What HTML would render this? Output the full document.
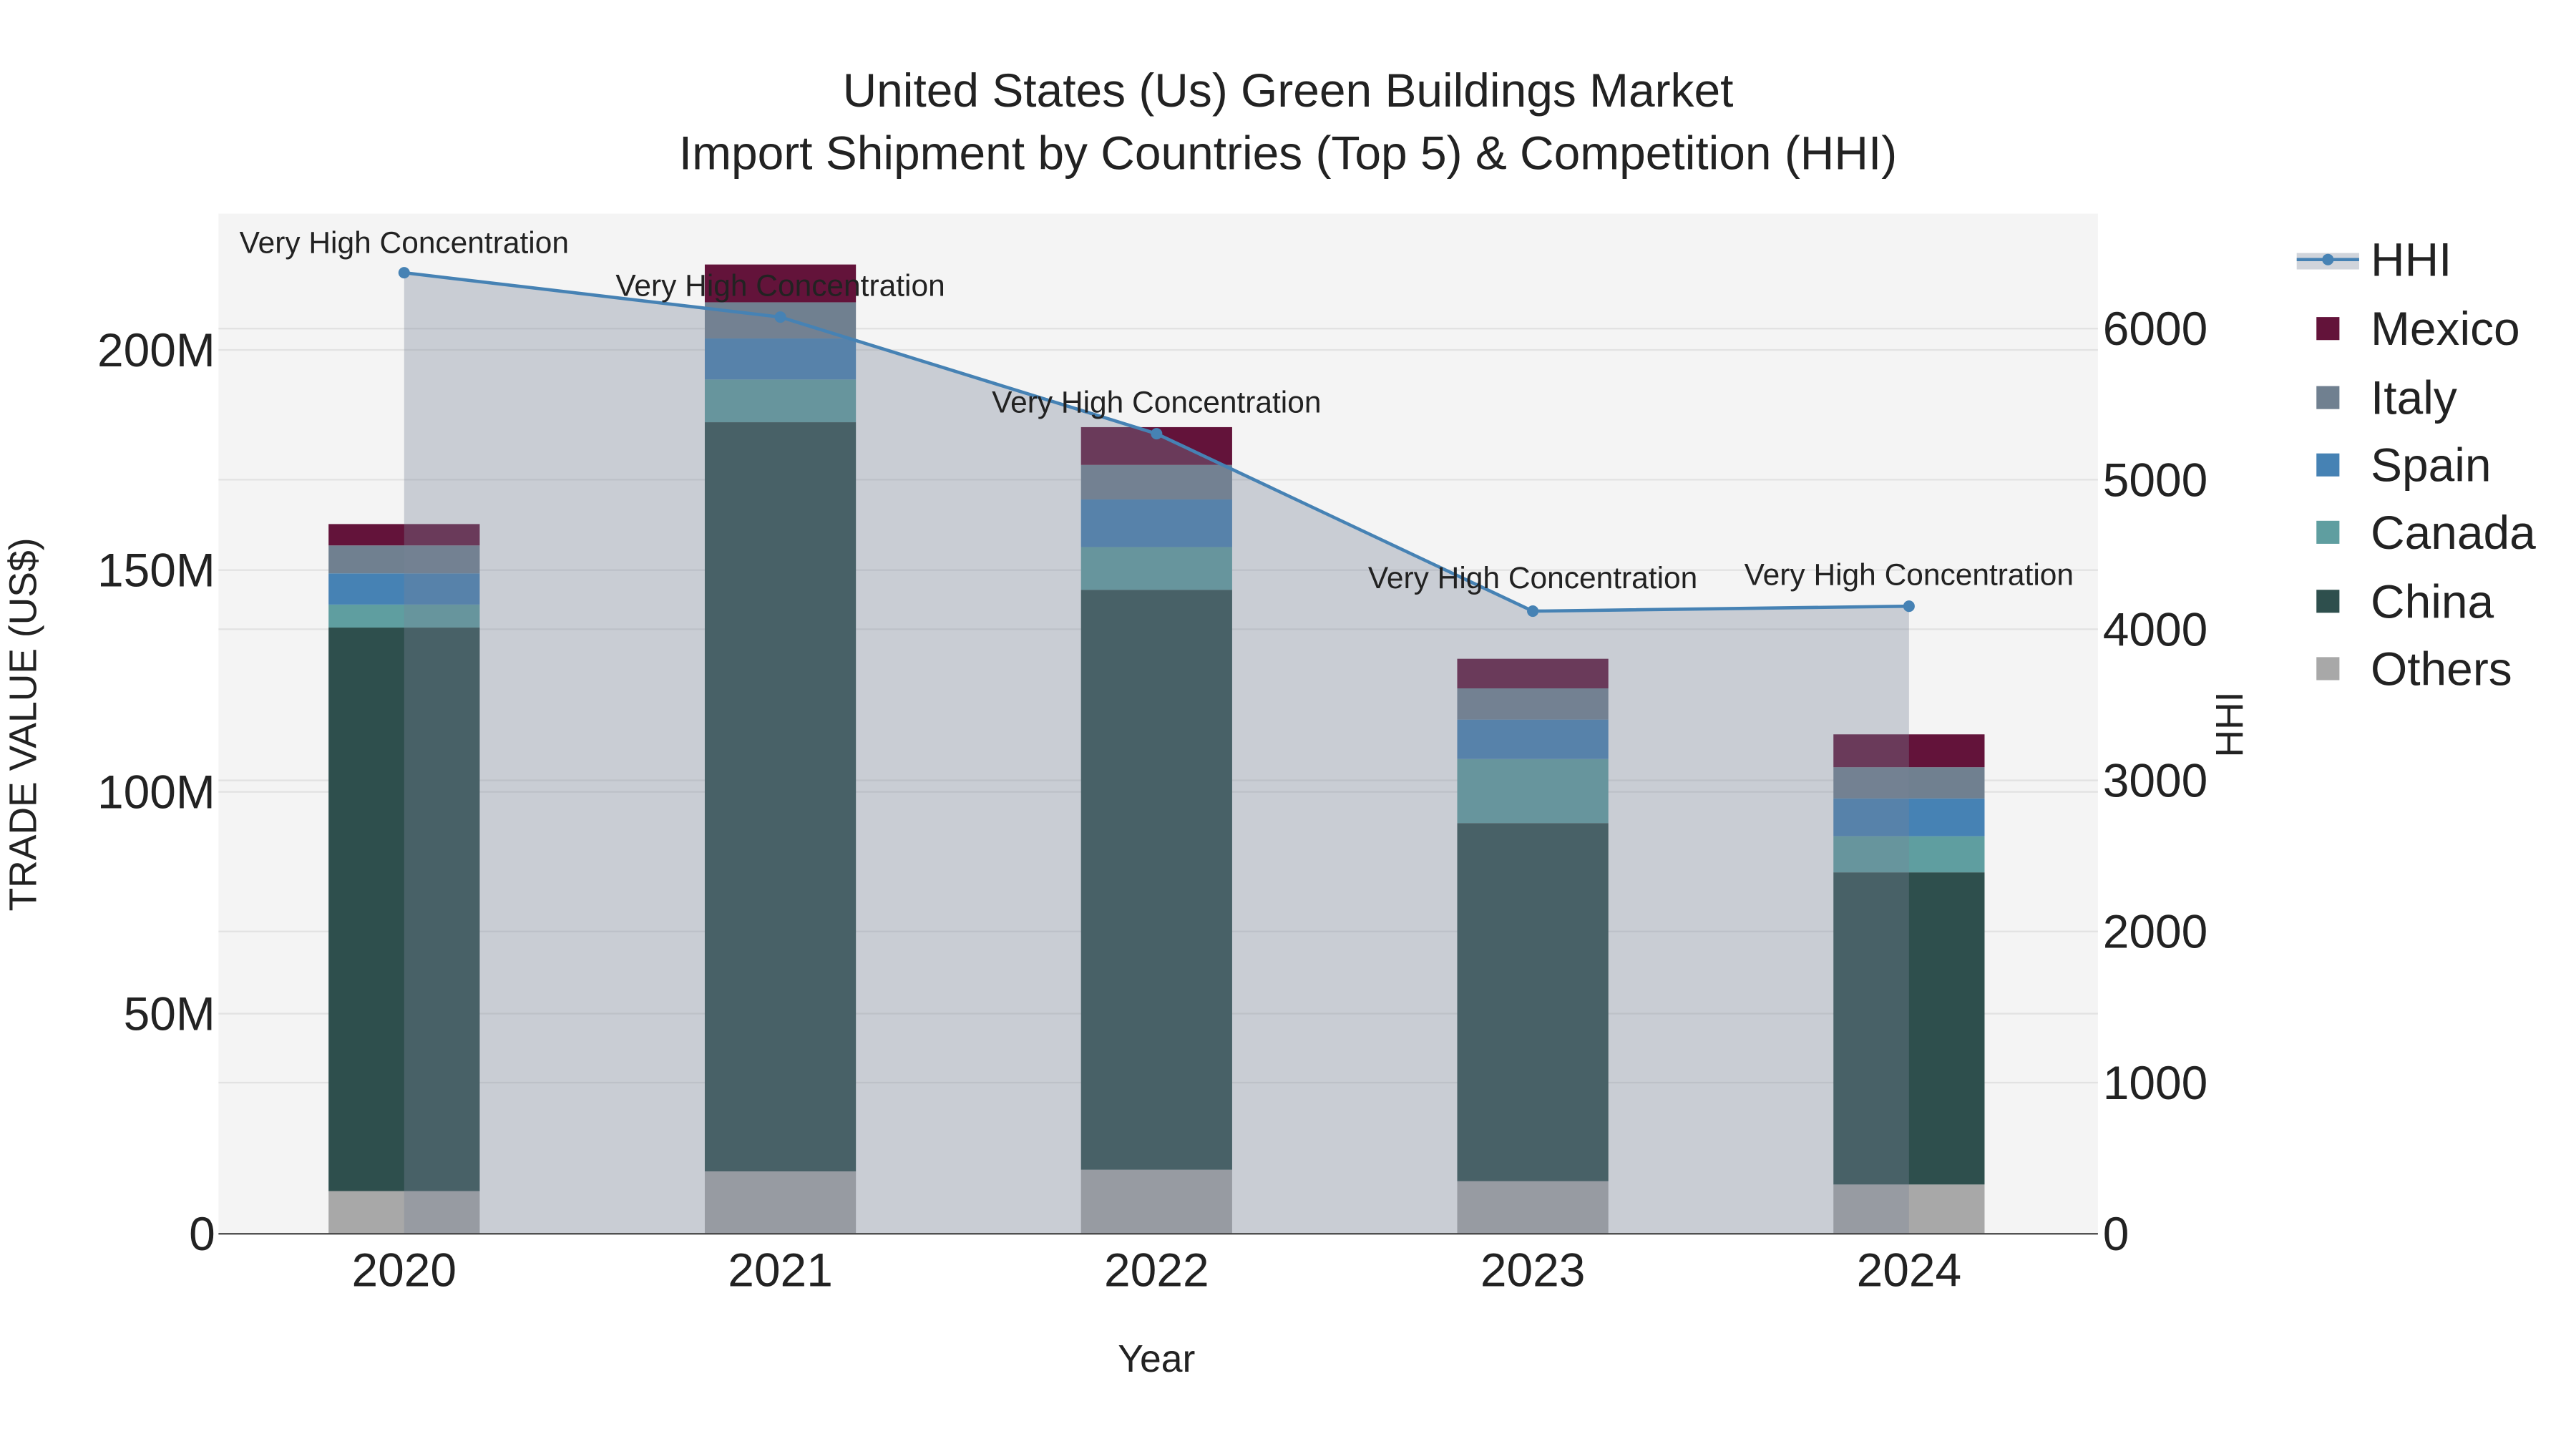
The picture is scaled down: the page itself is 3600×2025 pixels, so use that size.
<!DOCTYPE html>
<html><head><meta charset="utf-8"><style>html,body{margin:0;padding:0;background:#fff}svg{display:block}text{font-family:"Liberation Sans",sans-serif;fill:#222}</style></head><body>
<svg width="3600" height="2025" viewBox="0 0 1568 882" xmlns="http://www.w3.org/2000/svg">
<rect x="0" y="0" width="1600" height="900" fill="#fff"/>
<rect x="133" y="130" width="1144" height="621" fill="#f4f4f4"/>
<g stroke="#e2e2e2" stroke-width="1">
<line x1="133" x2="1277" y1="617" y2="617"/><line x1="133" x2="1277" y1="482" y2="482"/><line x1="133" x2="1277" y1="347" y2="347"/><line x1="133" x2="1277" y1="213" y2="213"/>
<line x1="133" x2="1277" y1="659" y2="659"/><line x1="133" x2="1277" y1="567" y2="567"/><line x1="133" x2="1277" y1="475" y2="475"/><line x1="133" x2="1277" y1="383" y2="383"/><line x1="133" x2="1277" y1="292" y2="292"/><line x1="133" x2="1277" y1="200" y2="200"/>
</g>
<g>
<rect x="200" y="725" width="92" height="26" fill="#a8a8a8"/><rect x="200" y="382" width="92" height="343" fill="#2e4f4d"/><rect x="200" y="368" width="92" height="14" fill="#5f9ea0"/><rect x="200" y="349" width="92" height="19" fill="#4682b4"/><rect x="200" y="332" width="92" height="17" fill="#708090"/><rect x="200" y="319" width="92" height="13" fill="#63133a"/>
<rect x="429" y="713" width="92" height="38" fill="#a8a8a8"/><rect x="429" y="257" width="92" height="456" fill="#2e4f4d"/><rect x="429" y="231" width="92" height="26" fill="#5f9ea0"/><rect x="429" y="206" width="92" height="25" fill="#4682b4"/><rect x="429" y="184" width="92" height="22" fill="#708090"/><rect x="429" y="161" width="92" height="23" fill="#63133a"/>
<rect x="658" y="712" width="92" height="39" fill="#a8a8a8"/><rect x="658" y="359" width="92" height="353" fill="#2e4f4d"/><rect x="658" y="333" width="92" height="26" fill="#5f9ea0"/><rect x="658" y="304" width="92" height="29" fill="#4682b4"/><rect x="658" y="283" width="92" height="21" fill="#708090"/><rect x="658" y="260" width="92" height="23" fill="#63133a"/>
<rect x="887" y="719" width="92" height="32" fill="#a8a8a8"/><rect x="887" y="501" width="92" height="218" fill="#2e4f4d"/><rect x="887" y="462" width="92" height="39" fill="#5f9ea0"/><rect x="887" y="438" width="92" height="24" fill="#4682b4"/><rect x="887" y="419" width="92" height="19" fill="#708090"/><rect x="887" y="401" width="92" height="18" fill="#63133a"/>
<rect x="1116" y="721" width="92" height="30" fill="#a8a8a8"/><rect x="1116" y="531" width="92" height="190" fill="#2e4f4d"/><rect x="1116" y="509" width="92" height="22" fill="#5f9ea0"/><rect x="1116" y="486" width="92" height="23" fill="#4682b4"/><rect x="1116" y="467" width="92" height="19" fill="#708090"/><rect x="1116" y="447" width="92" height="20" fill="#63133a"/>
</g>
<polygon points="246,751 246,166 475,193 704,264 933,372 1162,369 1162,751" fill="rgb(120,132,152)" fill-opacity="0.35"/>
<polyline points="246,166 475,193 704,264 933,372 1162,369" fill="none" stroke="#4682b4" stroke-width="2"/>
<g fill="#4682b4"><circle cx="246" cy="166" r="3.5"/><circle cx="475" cy="193" r="3.5"/><circle cx="704" cy="264" r="3.5"/><circle cx="933" cy="372" r="3.5"/><circle cx="1162" cy="369" r="3.5"/></g>
<line x1="133" x2="1277" y1="751" y2="751" stroke="#444" stroke-width="1"/>
<g font-size="18.5" text-anchor="middle">
<text x="246" y="154">Very High Concentration</text><text x="475" y="180">Very High Concentration</text><text x="704" y="251">Very High Concentration</text><text x="933" y="358">Very High Concentration</text><text x="1162" y="356">Very High Concentration</text>
</g>
<g font-size="28.7" text-anchor="end">
<text x="131" y="761">0</text><text x="131" y="627">50M</text><text x="131" y="492">100M</text><text x="131" y="357">150M</text><text x="131" y="223">200M</text>
</g>
<g font-size="28.7">
<text x="1280" y="761">0</text><text x="1280" y="669">1000</text><text x="1280" y="577">2000</text><text x="1280" y="485">3000</text><text x="1280" y="393">4000</text><text x="1280" y="302">5000</text><text x="1280" y="210">6000</text>
</g>
<g font-size="28.7" text-anchor="middle">
<text x="246" y="783">2020</text><text x="475" y="783">2021</text><text x="704" y="783">2022</text><text x="933" y="783">2023</text><text x="1162" y="783">2024</text>
<text x="784" y="65">United States (Us) Green Buildings Market</text>
<text x="784" y="103">Import Shipment by Countries (Top 5) &amp; Competition (HHI)</text>
</g>
<text x="704" y="835" font-size="23.3" text-anchor="middle">Year</text>
<text transform="translate(22,441) rotate(-90)" font-size="23.3" text-anchor="middle">TRADE VALUE (US$)</text>
<text transform="translate(1365,441) rotate(-90)" font-size="23.3" text-anchor="middle">HHI</text>
<rect x="1398" y="154" width="38" height="10" fill="rgb(120,132,152)" fill-opacity="0.35"/>
<line x1="1398" x2="1436" y1="158" y2="158" stroke="#4682b4" stroke-width="2"/><circle cx="1417" cy="158" r="3.5" fill="#4682b4"/>
<rect x="1410" y="193" width="14" height="14" fill="#63133a"/>
<rect x="1410" y="235" width="14" height="14" fill="#708090"/>
<rect x="1410" y="276" width="14" height="14" fill="#4682b4"/>
<rect x="1410" y="317" width="14" height="14" fill="#5f9ea0"/>
<rect x="1410" y="359" width="14" height="14" fill="#2e4f4d"/>
<rect x="1410" y="400" width="14" height="14" fill="#a8a8a8"/>
<g font-size="28.7">
<text x="1443" y="168">HHI</text><text x="1443" y="210">Mexico</text><text x="1443" y="252">Italy</text><text x="1443" y="293">Spain</text><text x="1443" y="334">Canada</text><text x="1443" y="376">China</text><text x="1443" y="417">Others</text>
</g>
</svg>
</body></html>
